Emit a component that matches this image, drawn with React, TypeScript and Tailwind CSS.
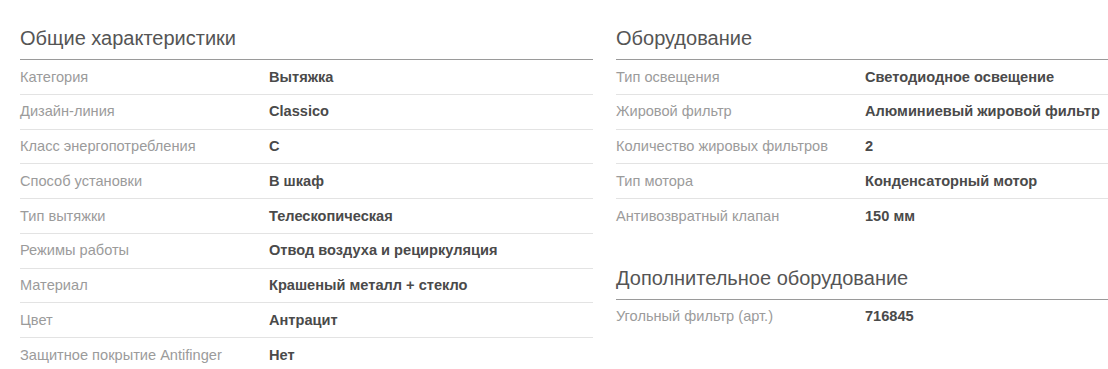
const general: [string, string][] = [
  ['Категория', 'Вытяжка'],
  ['Дизайн-линия', 'Classico'],
  ['Класс энергопотребления', 'C'],
  ['Способ установки', 'В шкаф'],
  ['Тип вытяжки', 'Телескопическая'],
  ['Режимы работы', 'Отвод воздуха и рециркуляция'],
  ['Материал', 'Крашеный металл + стекло'],
  ['Цвет', 'Антрацит'],
  ['Защитное покрытие Antifinger', 'Нет'],
];

const equipment: [string, string][] = [
  ['Тип освещения', 'Светодиодное освещение'],
  ['Жировой фильтр', 'Алюминиевый жировой фильтр'],
  ['Количество жировых фильтров', '2'],
  ['Тип мотора', 'Конденсаторный мотор'],
  ['Антивозвратный клапан', '150 мм'],
];

const extra: [string, string][] = [['Угольный фильтр (арт.)', '716845']];

function SpecTable({ title, rows }: { title: string; rows: [string, string][] }) {
  return (
    <section>
      <h2 className="border-b border-[#9a9a9a] pt-[26px] pb-[9px] text-[20px] leading-[24px] font-normal text-[#555]">
        {title}
      </h2>
      <dl>
        {rows.map(([label, value], index) => (
          <div
            key={label}
            className={`box-content flex h-[32.25px] items-center pt-[1.5px] text-[14.6px] ${
              index < rows.length - 1 ? 'border-b border-[#e3e3e3]' : ''
            }`}
          >
            <dt className="w-[249px] shrink-0 text-[#9b9b9b]">{label}</dt>
            <dd className="font-bold text-[#4a4a4a]">{value}</dd>
          </div>
        ))}
      </dl>
    </section>
  );
}

export default function App() {
  return (
    <main className="h-[369px] w-[1108px] overflow-hidden bg-white font-['Liberation_Sans',Arial,sans-serif]">
      <div className="flex gap-[23px] pl-5">
        <div className="w-[573px] shrink-0">
          <SpecTable title="Общие характеристики" rows={general} />
        </div>
        <div className="w-[573px] shrink-0">
          <SpecTable title="Оборудование" rows={equipment} />
          <div className="mt-[7px]">
            <SpecTable title="Дополнительное оборудование" rows={extra} />
          </div>
        </div>
      </div>
    </main>
  );
}
